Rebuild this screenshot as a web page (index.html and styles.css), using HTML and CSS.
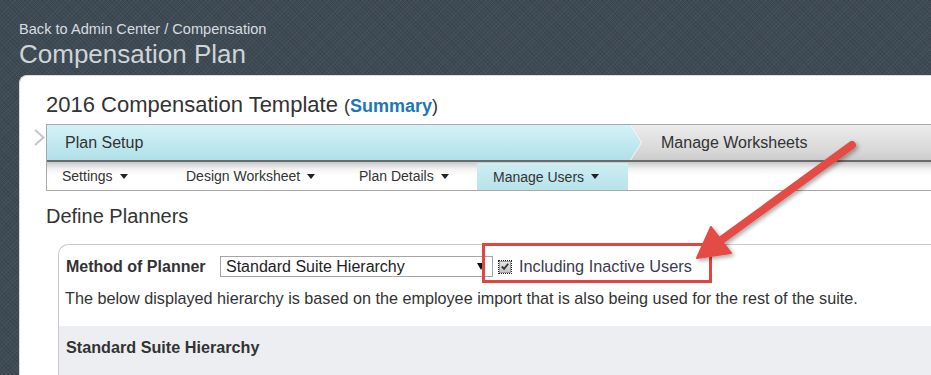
FILE: index.html
```html
<!DOCTYPE html>
<html lang="en">
<head>
<meta charset="utf-8">
<title>Compensation Plan</title>
<link rel="stylesheet" href="styles.css">
</head>
<body>
<div class="page">
  <header class="top">
    <div class="crumb">Back to Admin Center / Compensation</div>
    <h1 class="app-title">Compensation Plan</h1>
  </header>
  <main class="panel">
    <h2 class="tpl-title">2016 Compensation Template <span class="summary">(<a class="summary-link">Summary</a>)</span></h2>
    <div class="tab-row">
      <span class="chev"><svg width="19" height="36" viewBox="0 0 19 36"><polyline points="8,6 16.5,13.5 8,21" fill="none" stroke="#c3c7cb" stroke-width="2"/></svg></span>
      <div class="tabbox">
        <div class="steps">
          <div class="step-edge"><div class="step step-active">Plan Setup</div></div>
          <div class="step step-next">Manage Worksheets</div>
        </div>
        <div class="rule"></div>
        <nav class="submenu">
          <div class="sub">Settings<span class="caret"></span></div>
          <div class="sub">Design Worksheet<span class="caret"></span></div>
          <div class="sub">Plan Details<span class="caret"></span></div>
          <div class="sub sub-active">Manage Users<span class="caret"></span></div>
        </nav>
      </div>
    </div>
    <h3 class="section">Define Planners</h3>
    <div class="box">
      <div class="method-row">
        <span class="lbl">Method of Planner</span>
        <div class="select">Standard Suite Hierarchy<span class="sel-caret"></span></div>
        <span class="chk"><span class="chk-box"><svg width="11" height="11" viewBox="0 0 11 11"><path d="M2 5.5 L4.5 8 L9 2.5" fill="none" stroke="#333" stroke-width="2"/></svg></span></span>
        <span class="chk-label">Including Inactive Users</span>
      </div>
      <p class="desc">The below displayed hierarchy is based on the employee import that is also being used for the rest of the suite.</p>
      <div class="band"><span class="band-title">Standard Suite Hierarchy</span></div>
    </div>
  </main>
  <svg class="annot" width="931" height="375" viewBox="0 0 931 375">
    <defs>
      <filter id="sh" x="-20%" y="-20%" width="140%" height="140%">
        <feDropShadow dx="2" dy="2" stdDeviation="2" flood-color="#000" flood-opacity="0.35"/>
      </filter>
    </defs>
    <rect x="483.5" y="244.5" width="227" height="37" fill="none" stroke="#e2453f" stroke-width="3"/>
    <g filter="url(#sh)" fill="#e54b44" stroke="#e54b44">
      <line x1="852" y1="145" x2="720" y2="241" stroke-width="8" stroke-linecap="round"/>
      <polygon points="697,258 711,227 731,253" stroke-width="2" stroke-linejoin="round"/>
    </g>
  </svg>
</div>
</body>
</html>
```
FILE: styles.css
```css
* { box-sizing: border-box; }
html, body { margin: 0; padding: 0; }
body {
  width: 931px;
  height: 375px;
  overflow: hidden;
  font-family: "Liberation Sans", Arial, sans-serif;
  color: #333;
  background-color: #3e4a54;
  background-image:
    repeating-linear-gradient(45deg, rgba(0,0,0,.08) 0 1px, transparent 1px 3px),
    repeating-linear-gradient(-45deg, rgba(255,255,255,.035) 0 1px, transparent 1px 3px);
}
.page { position: relative; height: 375px; display: flex; flex-direction: column; overflow: hidden; }
.top { padding: 20px 0 0 19px; }
.crumb { font-size: 14.6px; line-height: 18px; color: #d7dce0; }
.app-title { margin: 1px 0 0; font-size: 26px; line-height: 30px; font-weight: normal; color: #cfd4d8; }

.panel {
  flex: 1;
  min-height: 0;
  display: flex;
  flex-direction: column;
  margin: 6px 0 0 19px;
  background: #fff;
  border-top: 1px solid #dadde0;
  border-left: 1px solid #dadde0;
  border-radius: 8px 0 0 0;
  padding: 16px 0 0 26px;
}
.tpl-title { margin: 0; font-size: 22px; line-height: 26px; font-weight: normal; color: #333; }
.summary { font-size: 18px; line-height: 1; }
.summary-link { color: #1b78b8; font-weight: bold; }

.tab-row { display: flex; margin: 6px 0 0 -19px; }
.chev { flex: 0 0 19px; display: block; }
.tabbox { flex: 1; border: 1px solid #a9a9a9; border-right: none; }
.steps { display: flex; height: 35px; background: linear-gradient(#ececec, #d6d6d6 80%, #cbcbcb); }
.step-edge {
  flex: 0 0 595px;
  background: #f6f6f6;
  clip-path: polygon(0 0, 584px 0, 595px 50%, 584px 100%, 0 100%);
}
.step { font-size: 16px; line-height: 35px; color: #333; }
.step-active {
  width: 594px;
  height: 35px;
  padding-left: 18px;
  background: linear-gradient(#d4f2f7, #b1e0e8);
  clip-path: polygon(0 0, 583px 0, 594px 50%, 583px 100%, 0 100%);
}
.step-next { padding-left: 19px; }
.rule { height: 2px; background: #6a6a6a; }
.submenu {
  display: grid;
  grid-template-columns: 124px 173px 133px 151px;
  height: 28px;
  background: linear-gradient(#c9c9c9 0, #f2f2f2 7px, #fff 13px);
}
.sub { display: flex; align-items: center; padding-left: 15px; font-size: 14px; color: #333; }
.sub-active { background: linear-gradient(#cdeef3, #b8e3ea); padding-left: 16px; margin-top: 1px; }
.caret {
  display: inline-block;
  margin-left: 7px;
  border-left: 4.5px solid transparent;
  border-right: 4.5px solid transparent;
  border-top: 5px solid #222;
}

.section { margin: 14px 0 0; font-size: 20px; line-height: 22px; font-weight: normal; color: #333; }

.box {
  flex: 1;
  display: flex;
  flex-direction: column;
  margin: 17px 0 0 12px;
  border-top: 1px solid #cacace;
  border-left: 1px solid #cacace;
  border-radius: 10px 0 0 0;
}
.method-row { display: flex; align-items: center; height: 29px; margin-top: 7px; padding-left: 7px; }
.lbl { flex: 0 0 154px; font-size: 16px; font-weight: bold; color: #333; }
.select {
  flex: 0 0 273px;
  height: 21px;
  border: 1px solid #a6a6a6;
  display: flex;
  align-items: center;
  padding-left: 5px;
  font-size: 16px;
  color: #222;
}
.sel-caret {
  margin-left: auto;
  margin-right: 7px;
  border-left: 4px solid transparent;
  border-right: 4px solid transparent;
  border-top: 7px solid #111;
}
.chk { margin-left: 5px; width: 14px; height: 14px; border: 1px dotted #222; display: flex; align-items: center; justify-content: center; }
.chk-box { width: 12px; height: 12px; background: linear-gradient(#e4e4e4, #c4c4c4); border: 1px solid #9a9a9a; display: flex; align-items: center; justify-content: center; }
.chk-box svg { display: block; }
.chk-label { margin-left: 7px; font-size: 16.3px; color: #3b3b4f; }

.desc { margin: 8px 0 0; padding-left: 6px; font-size: 16.2px; line-height: 18px; color: #333; }
.band { flex: 1; margin-top: 19px; background: #edeef2; padding: 12px 0 0 7px; }
.band-title { font-size: 16.2px; line-height: 18px; font-weight: bold; color: #333; }

.annot { position: absolute; left: 0; top: 0; pointer-events: none; }
```
